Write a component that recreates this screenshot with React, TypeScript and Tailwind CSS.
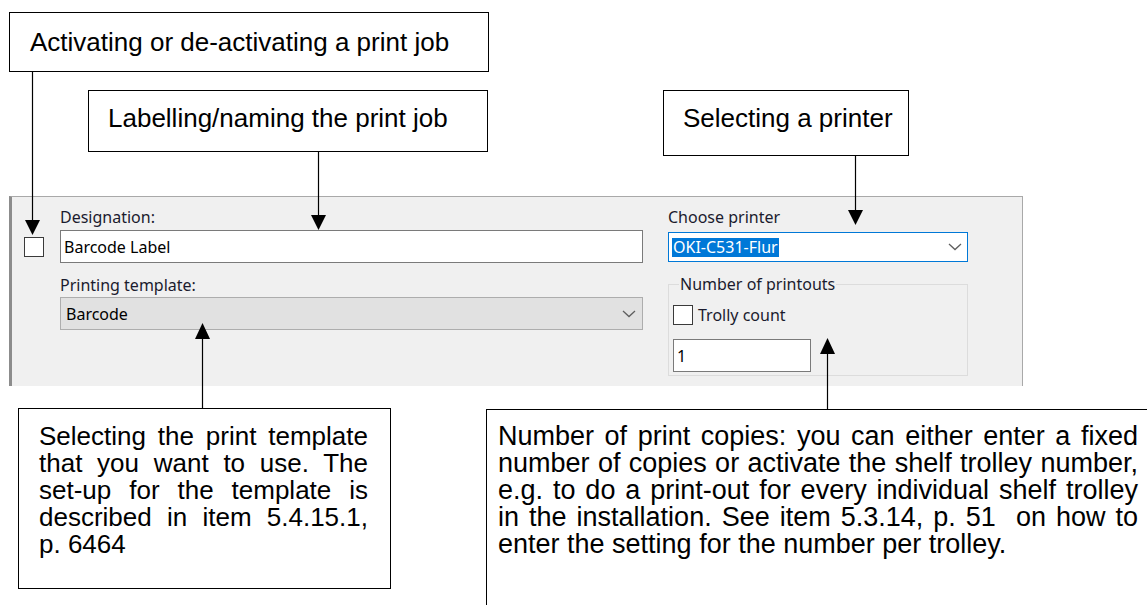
import React from "react";

const ui = { fontFamily: '"Noto Sans", "Open Sans", sans-serif' };
const doc = { fontFamily: '"Liberation Sans", Arial, sans-serif' };

function Chevron() {
  return (
    <svg width="14" height="8" viewBox="0 0 14 8" className="shrink-0">
      <polyline points="1,1 7,6.5 13,1" fill="none" stroke="#5f5f5f" strokeWidth="1.3" />
    </svg>
  );
}

function Arrows() {
  const down = (x: number, y1: number, tip: number) => (
    <g key={`d${x}`}>
      <line x1={x} y1={y1} x2={x} y2={tip - 12} stroke="#000" strokeWidth="1.2" />
      <polygon points={`${x - 7.5},${tip - 15} ${x + 7.5},${tip - 15} ${x},${tip}`} fill="#000" />
    </g>
  );
  const up = (x: number, y1: number, tip: number) => (
    <g key={`u${x}`}>
      <line x1={x} y1={y1} x2={x} y2={tip + 12} stroke="#000" strokeWidth="1.2" />
      <polygon points={`${x - 7.5},${tip + 16} ${x + 7.5},${tip + 16} ${x},${tip}`} fill="#000" />
    </g>
  );
  return (
    <svg className="absolute left-0 top-0 pointer-events-none" width="1147" height="605">
      {down(32.5, 72, 235)}
      {down(318.5, 152, 230)}
      {down(855.5, 156, 225)}
      {up(202.5, 408, 323)}
      {up(827.5, 409, 338)}
    </svg>
  );
}

export default function App() {
  return (
    <div className="relative w-[1147px] h-[605px] overflow-hidden bg-white pt-[196px]">
      {/* Dialog panel */}
      <div
        className="ml-[9px] w-[1014px] h-[190px] bg-[#f0f0f0] border-t border-r border-[#a9a9a9] border-l-[3px] border-l-[#8c8c8c] flex text-[16px] text-[#1b1b2e]"
        style={ui}
      >
        <div className="ml-[12px] mt-[40px] w-[20px] h-[20px] border border-[#3a3a3a] bg-white shrink-0" />
        <div className="ml-[16px] pt-[9px] w-[583px] flex flex-col">
          <div className="leading-[22px] h-[22px]">Designation:</div>
          <div className="mt-[2px] h-[33px] border border-[#7a7a7a] bg-white flex items-center pl-[3px] text-black">
            Barcode Label
          </div>
          <div className="mt-[11px] leading-[22px] h-[22px]">Printing template:</div>
          <div className="mt-[1px] h-[33px] border border-[#adadad] bg-[#e1e1e1] flex items-center justify-between pl-[5px] pr-[6px] text-black">
            <span>Barcode</span>
            <Chevron />
          </div>
        </div>
        <div className="ml-[25px] pt-[9px] w-[300px] flex flex-col">
          <div className="leading-[22px] h-[22px]">Choose printer</div>
          <div className="mt-[4px] h-[30px] border border-[#0078d7] bg-white flex items-center justify-between pl-[3px] pr-[5px]">
            <span className="bg-[#0078d7] text-white leading-[19px] px-[1px]">OKI-C531-Flur</span>
            <Chevron />
          </div>
          <fieldset className="mt-[11px] border border-[#dcdcdc] pl-[4px] pb-[3px]">
            <legend className="ml-[6px] px-[1px] leading-[22px]">Number of printouts</legend>
            <div className="mt-[10px] flex items-center h-[20px]">
              <div className="w-[20px] h-[20px] border border-[#3a3a3a] bg-white" />
              <span className="ml-[5px]">Trolly count</span>
            </div>
            <div className="mt-[14px] w-[138px] h-[33px] border border-[#7a7a7a] bg-white flex items-center pl-[3px] text-black">
              1
            </div>
          </fieldset>
        </div>
      </div>

      {/* Callouts */}
      <div className="absolute left-[9px] top-[12px] w-[480px] h-[60px] border border-black bg-white pl-[20px] pt-[14px] text-[26px] leading-[30px] text-black" style={doc}>
        Activating or de-activating a print job
      </div>
      <div className="absolute left-[88px] top-[90px] w-[400px] h-[62px] border border-black bg-white pl-[19px] pt-[12px] text-[26px] leading-[30px] text-black" style={doc}>
        Labelling/naming the print job
      </div>
      <div className="absolute left-[663px] top-[90px] w-[246px] h-[66px] border border-black bg-white pl-[19px] pt-[12px] text-[26px] leading-[30px] text-black" style={doc}>
        Selecting a printer
      </div>
      <div className="absolute left-[18px] top-[408px] w-[373px] h-[181px] border border-black bg-white pl-[20px] pr-[22px] pt-[14px] text-[26px] leading-[27px] text-black text-justify" style={doc}>
        Selecting the print template that you want to use. The set-up for the template is described in item 5.4.15.1, p. 6464
      </div>
      <div className="absolute left-[486px] top-[409px] w-[680px] h-[220px] border border-black bg-white pl-[11px] pt-[13px] text-black" style={doc}>
        <div className="w-[640px] text-[27px] leading-[27px] text-justify">
          Number of print copies: you can either enter a fixed number of copies or activate the shelf trolley number, e.g. to do a print-out for every individual shelf trolley in the installation. See item 5.3.14, p. 51&nbsp; on how to enter the setting for the number per trolley.
        </div>
      </div>

      <Arrows />
    </div>
  );
}
